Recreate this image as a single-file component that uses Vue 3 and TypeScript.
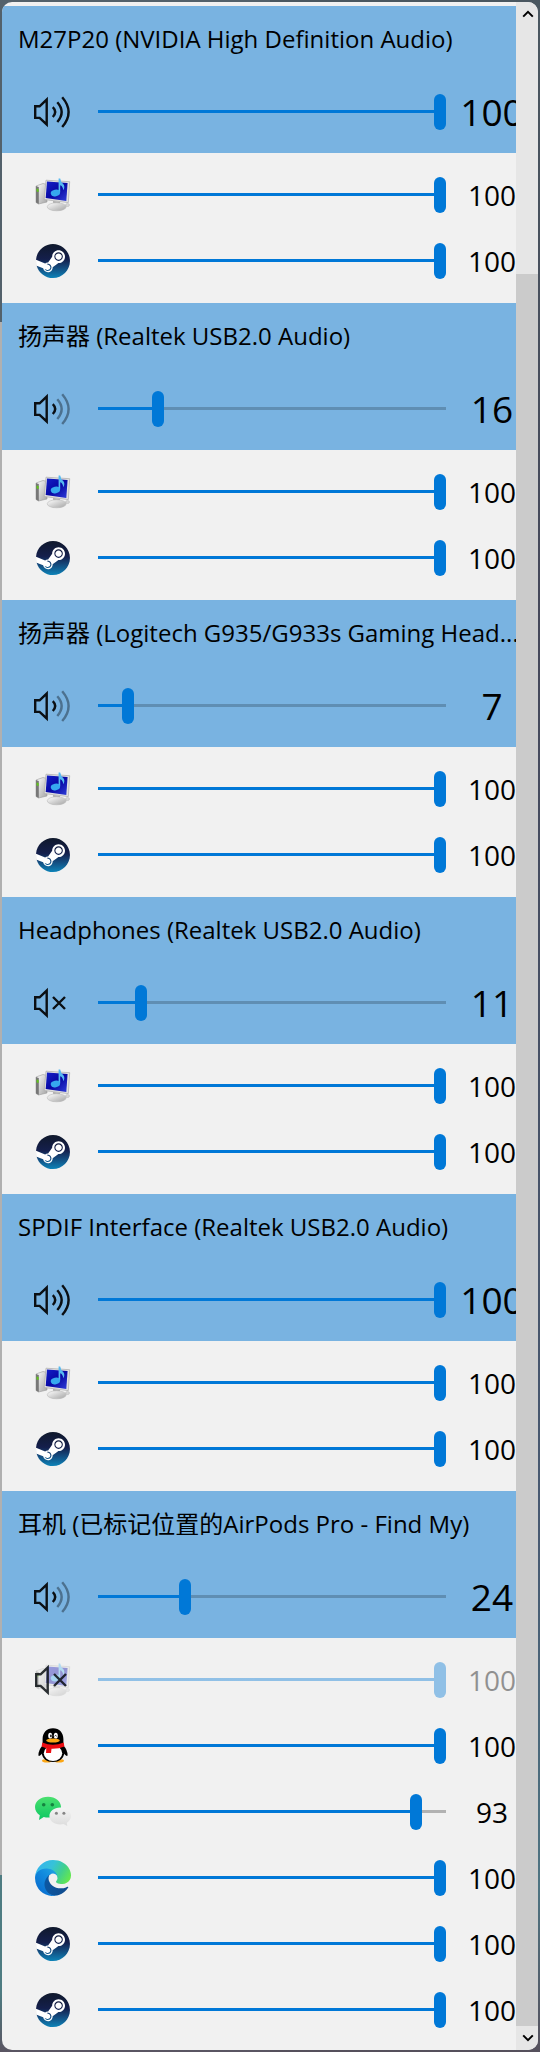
<script setup lang="ts">
import { reactive, ref } from 'vue'

type IconName = 'system' | 'steam' | 'qq' | 'wechat' | 'edge'

interface AppSession {
  name: string
  icon: IconName
  volume: number
  muted: boolean
}

interface Device {
  name: string
  volume: number
  muted: boolean
  apps: AppSession[]
}

const session = (name: string, icon: IconName, volume = 100, muted = false): AppSession => ({
  name,
  icon,
  volume,
  muted,
})

const defaultApps = (): AppSession[] => [session('System Sounds', 'system'), session('Steam', 'steam')]

const devices = reactive<Device[]>([
  { name: 'M27P20 (NVIDIA High Definition Audio)', volume: 100, muted: false, apps: defaultApps() },
  { name: '扬声器 (Realtek USB2.0 Audio)', volume: 16, muted: false, apps: defaultApps() },
  { name: '扬声器 (Logitech G935/G933s Gaming Head...', volume: 7, muted: false, apps: defaultApps() },
  { name: 'Headphones (Realtek USB2.0 Audio)', volume: 11, muted: true, apps: defaultApps() },
  { name: 'SPDIF Interface (Realtek USB2.0 Audio)', volume: 100, muted: false, apps: defaultApps() },
  {
    name: '耳机 (已标记位置的AirPods Pro - Find My)',
    volume: 24,
    muted: false,
    apps: [
      session('System Sounds', 'system', 100, true),
      session('QQ', 'qq'),
      session('WeChat', 'wechat', 93),
      session('Microsoft Edge', 'edge'),
      session('Steam', 'steam'),
      session('Steam', 'steam'),
    ],
  },
])

const waves = ['M18.8 13.2Q23.6 18 18.8 23', 'M23.3 8.3Q32 18 23.3 28', 'M28.2 3.2Q41 18 28.2 33']

const scroll = ref({ before: 248, thumb: 1752 })

const isLit = (volume: number, index: number) => volume > index * 33
</script>

<template>
  <svg class="sprite" aria-hidden="true">
    <defs>
      <linearGradient id="steam-fill" x1="0" y1="0" x2="0" y2="1">
        <stop offset="0" stop-color="#10192c" />
        <stop offset="0.45" stop-color="#141f4c" />
        <stop offset="0.7" stop-color="#144b7e" />
        <stop offset="1" stop-color="#0d83b8" />
      </linearGradient>
      <linearGradient id="case-fill" x1="0" y1="0" x2="1" y2="1">
        <stop offset="0" stop-color="#ffffff" />
        <stop offset="1" stop-color="#a4a4a4" />
      </linearGradient>
      <linearGradient id="screen-fill" x1="0" y1="0" x2="1" y2="1">
        <stop offset="0" stop-color="#1420c8" />
        <stop offset="0.5" stop-color="#0808a4" />
        <stop offset="1" stop-color="#2f3ed8" />
      </linearGradient>
      <linearGradient id="chat-fill" x1="0" y1="0" x2="0" y2="1">
        <stop offset="0" stop-color="#4be06f" />
        <stop offset="1" stop-color="#0cc763" />
      </linearGradient>
      <linearGradient id="bubble-fill" x1="0" y1="0" x2="0" y2="1">
        <stop offset="0" stop-color="#f4f4f4" />
        <stop offset="1" stop-color="#dcdcdc" />
      </linearGradient>
      <linearGradient id="edge-deep" x1="0" y1="0.5" x2="1" y2="0.5">
        <stop offset="0" stop-color="#0c59a4" />
        <stop offset="1" stop-color="#114a8b" />
      </linearGradient>
      <linearGradient id="edge-mid" x1="0.8" y1="0.2" x2="0.2" y2="0.9">
        <stop offset="0" stop-color="#1b9de2" />
        <stop offset="0.4" stop-color="#1188dd" />
        <stop offset="1" stop-color="#0a6fd0" />
      </linearGradient>
      <linearGradient id="edge-top" x1="0" y1="0.3" x2="1" y2="0.7">
        <stop offset="0" stop-color="#35b4ee" />
        <stop offset="0.4" stop-color="#36c2d8" />
        <stop offset="0.7" stop-color="#40d08e" />
        <stop offset="1" stop-color="#66e84c" />
      </linearGradient>
    </defs>

    <symbol id="icon-system" viewBox="0 0 36 36">
      <path d="M1 9L8 6.500L12 7.500V25L3.500 27L1 25.500Z" fill="url(#case-fill)" stroke="#9b9b9b" stroke-width="0.600" />
      <path d="M1 9L3.800 10V27L1 25.500Z" fill="#777" />
      <path d="M1.600 11.500L3.600 12V15L1.600 14.500Z" fill="#61c51c" />
      <ellipse cx="32.500" cy="28" rx="2" ry="1.500" fill="#d6d6d6" stroke="#b4b4b4" stroke-width="0.500" />
      <path d="M18 24L25 25L24.500 29H18.500Z" fill="#a9a9a9" />
      <ellipse cx="21.700" cy="29.800" rx="9.500" ry="4" fill="url(#case-fill)" stroke="#bcbcbc" stroke-width="0.600" />
      <path d="M11 3.200L34.700 4.700L33.300 25.600L9.200 22.500Z" fill="#e2e2e2" stroke="#ababab" stroke-width="0.700" />
      <path d="M12 4.600L32.600 6L31.300 23.900L10.700 21Z" fill="url(#screen-fill)" />
      <path d="M23.600 1.500H25.200Q25.600 5 28.600 7.500Q30.200 10 28.300 13.200Q27.800 9 25.200 8.200V15.500H23.600Z" fill="#55b9f1" />
      <ellipse cx="20.400" cy="16" rx="4.700" ry="3.300" transform="rotate(-12 20.400 16)" fill="#36a9ef" />
    </symbol>

    <symbol id="icon-steam" viewBox="0 0 36 36">
      <g transform="translate(1 1) scale(1.4167)">
        <circle cx="12" cy="12" r="11.700" fill="#fff" />
        <path
          fill="url(#steam-fill)"
          d="M11.979 0C5.678 0 .511 4.86.022 11.037l6.432 2.658c.545-.371 1.203-.59 1.912-.59.063 0 .125.004.188.006l2.861-4.142V8.91c0-2.495 2.028-4.524 4.524-4.524 2.494 0 4.524 2.031 4.524 4.527s-2.03 4.525-4.524 4.525h-.105l-4.076 2.911c0 .052.004.105.004.159 0 1.875-1.515 3.396-3.39 3.396-1.635 0-3.016-1.173-3.331-2.727L.436 15.27C1.862 20.307 6.486 24 11.979 24c6.627 0 11.999-5.373 11.999-12S18.605 0 11.979 0zM7.54 18.21l-1.473-.61c.262.543.714.999 1.314 1.25 1.297.539 2.793-.076 3.332-1.375.263-.63.264-1.319.005-1.949s-.75-1.121-1.377-1.383c-.624-.26-1.29-.249-1.878-.03l1.523.63c.956.4 1.409 1.5 1.009 2.455-.397.957-1.497 1.41-2.454 1.012H7.54zm11.415-9.303c0-1.662-1.353-3.015-3.015-3.015-1.665 0-3.015 1.353-3.015 3.015 0 1.665 1.35 3.015 3.015 3.015 1.663 0 3.015-1.35 3.015-3.015zm-5.273-.005c0-1.252 1.013-2.266 2.265-2.266 1.249 0 2.266 1.014 2.266 2.266 0 1.251-1.017 2.265-2.266 2.265-1.253 0-2.265-1.014-2.265-2.265z"
        />
      </g>
    </symbol>

    <symbol id="icon-qq" viewBox="0 0 36 36">
      <ellipse cx="12" cy="32.800" rx="5" ry="1.800" fill="#fba614" />
      <ellipse cx="24" cy="32.800" rx="5" ry="1.800" fill="#fba614" />
      <path d="M8 17Q3.300 22 3.400 27.500Q4.500 29 7.500 25Z" />
      <path d="M28 17Q32.700 22 32.600 27.500Q31.500 29 28.500 25Z" />
      <path d="M18 0.300C11.500 0.300 7.600 5 7.600 11V17Q6 21 6.600 25C7.500 31 12 34 18 34S28.500 31 29.400 25Q30 21 28.400 17V11C28.400 5 24.500 0.300 18 0.300Z" />
      <ellipse cx="18" cy="25.300" rx="9.200" ry="7.800" fill="#fff" />
      <ellipse cx="15.200" cy="7.700" rx="2" ry="2.900" fill="#fff" />
      <ellipse cx="20.800" cy="7.700" rx="2" ry="2.900" fill="#fff" />
      <ellipse cx="15.900" cy="7.900" rx="0.800" ry="1.300" />
      <path d="M19.600 8.200Q20.500 6.700 21.600 8.200" fill="none" stroke="#000" stroke-width="0.900" />
      <ellipse cx="18" cy="12.500" rx="6.800" ry="2" fill="#fba614" />
      <path d="M7.300 14.500Q18 19 28.700 14.500L29.400 18.500Q24 21 16.500 20.800L16 25H11L11.300 20.200L6.600 18.500Z" fill="#ec0d12" />
    </symbol>

    <symbol id="icon-wechat" viewBox="0 0 36 36">
      <path d="M13 2.700C5.600 2.700 0 7.300 0 13C0 16.500 2 19.300 4.800 21.300L4 26L8.800 23C10.200 23.400 11.500 23.600 13 23.600C20.400 23.600 26 19 26 13S20.400 2.700 13 2.700Z" fill="url(#chat-fill)" />
      <circle cx="8.700" cy="10.700" r="1.800" fill="#15823f" />
      <circle cx="17.300" cy="10.700" r="1.800" fill="#15823f" />
      <path d="M25.200 13.500C19 13.500 14.400 17.300 14.400 22S19 30.500 25.200 30.500Q27 30.500 28.500 30.100L32.300 32L31.800 28.800C34.300 27.200 36 24.800 36 22C36 17.300 31.300 13.500 25.200 13.500Z" fill="url(#bubble-fill)" />
      <circle cx="21.400" cy="19.300" r="1.500" fill="#858585" />
      <circle cx="28.900" cy="19.300" r="1.500" fill="#858585" />
    </symbol>

    <symbol id="icon-edge" viewBox="0 0 256 256">
      <path
        fill="url(#edge-deep)"
        transform="translate(-4.630 -4.920)"
        d="M235.680 195.460a93.730 93.730 0 0 1-10.540 4.710 101.870 101.870 0 0 1-35.900 6.460c-47.320 0-88.540-32.550-88.540-74.320A31.480 31.480 0 0 1 117.130 105c-42.800 1.800-53.800 46.400-53.800 72.530 0 73.880 68.090 81.370 82.760 81.370 7.910 0 19.840-2.300 27-4.560l1.310-.44a128.340 128.340 0 0 0 66.600-52.800 4 4 0 0 0-5.320-5.640z"
      />
      <path
        fill="url(#edge-mid)"
        transform="translate(-4.630 -4.920)"
        d="M110.340 246.340A79.200 79.200 0 0 1 87.600 225a80.720 80.720 0 0 1 29.530-120c3.120-1.470 8.450-4.050 15.540-4a32.350 32.350 0 0 1 25.690 13 31.880 31.880 0 0 1 6.360 18.660c0-.21 24.460-79.600-80-79.600-43.900 0-80 41.660-80 78.210a130.150 130.150 0 0 0 12.110 56 128 128 0 0 0 156.380 67.110 75.550 75.550 0 0 1-62.780-8z"
      />
      <path
        fill="url(#edge-top)"
        d="M152.330 148.860c-.81 1.050-3.300 2.500-3.300 5.660 0 2.610 1.700 5.120 4.720 7.230 14.380 10 41.490 8.680 41.560 8.680a59.560 59.560 0 0 0 30.270-8.350 61.380 61.380 0 0 0 30.430-52.880c.26-22.410-8-37.310-11.340-43.910C223.460 23.840 177.720 0 128 0A128 128 0 0 0 0 126.200c.48-36.540 36.800-66.050 80-66.050 3.500 0 23.460.34 42 10.070 16.340 8.580 24.900 18.940 30.850 29.210 6.180 10.670 7.280 24.150 7.280 29.520s-2.740 13.330-7.800 19.910z"
      />
    </symbol>
  </svg>

  <div class="desktop">
    <div class="flyout">
      <main class="devices">
        <section v-for="(device, d) in devices" :key="d" class="device">
          <header class="device-head">
            <h2 class="device-name">{{ device.name }}</h2>
            <div class="row row-main">
              <button
                class="icon-button"
                type="button"
                :aria-label="`Mute ${device.name}`"
                :aria-pressed="device.muted"
                @click="device.muted = !device.muted"
              >
                <svg class="icon speaker" viewBox="1 0 36 36">
                  <path d="M1.200 12.300H5.600L12.700 5.600V30.400L5.600 23.900H1.200Z" />
                  <path v-if="device.muted" d="M19 12L31 24M31 12L19 24" />
                  <template v-else>
                    <path v-for="(w, i) in waves" :key="i" :class="{ dim: !isLit(device.volume, i) }" :d="w" />
                  </template>
                </svg>
              </button>
              <input
                :id="`device-${d}`"
                v-model.number="device.volume"
                class="slider"
                type="range"
                min="0"
                max="100"
                :aria-label="device.name"
                :style="{ '--value': device.volume / 100 }"
              />
              <output class="value" :for="`device-${d}`">{{ device.volume }}</output>
            </div>
          </header>

          <div class="apps">
            <div v-for="(app, a) in device.apps" :key="a" class="row" :class="{ muted: app.muted }">
              <button
                class="icon-button"
                type="button"
                :aria-label="`Mute ${app.name}`"
                :aria-pressed="app.muted"
                @click="app.muted = !app.muted"
              >
                <svg class="icon app-icon" viewBox="0 0 36 36"><use :href="`#icon-${app.icon}`" /></svg>
                <svg v-if="app.muted" class="icon speaker mute-badge" viewBox="0 0 36 36">
                  <path d="M1.200 12.300H5.600L12.700 5.600V30.400L5.600 23.900H1.200Z" />
                  <path d="M19 12L31 24M31 12L19 24" />
                </svg>
              </button>
              <input
                :id="`app-${d}-${a}`"
                v-model.number="app.volume"
                class="slider"
                type="range"
                min="0"
                max="100"
                :aria-label="app.name"
                :style="{ '--value': app.volume / 100 }"
              />
              <output class="value" :for="`app-${d}-${a}`">{{ app.volume }}</output>
            </div>
          </div>
        </section>
      </main>

      <div class="scrollbar">
        <button class="scroll-button" type="button" aria-label="Scroll up">
          <svg viewBox="0 0 12 8"><path d="M1.200 6.600L6 1.800L10.800 6.600" /></svg>
        </button>
        <div class="scroll-gap" :style="{ flexGrow: scroll.before }"></div>
        <div class="scroll-thumb" :style="{ flexGrow: scroll.thumb }"></div>
        <button class="scroll-button" type="button" aria-label="Scroll down">
          <svg viewBox="0 0 12 8"><path d="M1.200 1.400L6 6.200L10.800 1.400" /></svg>
        </button>
      </div>
    </div>
  </div>
</template>

<style>
body {
  margin: 0;
}
</style>

<style scoped>
.sprite {
  position: absolute;
  width: 0;
  height: 0;
}

.desktop {
  box-sizing: border-box;
  min-height: 100vh;
  padding: 2px;
  background:
    linear-gradient(#53616b 0 322px, #b0b0b0 322px calc(100% - 177px), #4e7c82 calc(100% - 177px) calc(100% - 60px), #5a5562) 0 0 / 50% 100% no-repeat,
    linear-gradient(#4a5760, #45485a 30%, #485a72 75%, #4e7482 92%, #55505c) 100% 0 / 50% 100% no-repeat;
}

.flyout {
  display: flex;
  overflow: hidden;
  border-radius: 10px;
  background: #f1f1f1;
  color: #000;
  font-family: "Open Sans", "Noto Sans CJK SC", sans-serif;
}

.devices {
  flex: 1;
  min-width: 0;
  overflow: hidden;
  padding-top: 4px;
}

.device-head {
  padding: 18px 0 8px;
  background: #79b3e1;
}

.device-name {
  margin: 0 0 25px;
  padding-left: 16px;
  overflow: hidden;
  font-size: 24px;
  font-weight: 400;
  line-height: 30px;
  white-space: nowrap;
}

.row {
  display: flex;
  align-items: center;
  height: 66px;
  padding-left: 33px;
}

.apps {
  padding: 9px 0;
}

.device:last-child .apps {
  padding-bottom: 7px;
}

.icon-button {
  display: grid;
  flex: none;
  width: 36px;
  height: 36px;
  margin-right: 27px;
  padding: 0;
  border: 0;
  background: none;
}

.icon {
  grid-area: 1 / 1;
  width: 36px;
  height: 36px;
  overflow: visible;
}

.speaker {
  fill: none;
  stroke: #0b0f13;
  stroke-width: 2.4;
}

.speaker .dim {
  opacity: 0.4;
}

.mute-badge {
  opacity: 0.85;
}

.slider {
  flex: 1;
  min-width: 0;
  height: 36px;
  margin: 0;
  appearance: none;
  --fill: calc(6px + (100% - 12px) * var(--value));
  background: linear-gradient(to right, #0078d7 var(--fill), #b2b2b2 var(--fill)) 0 16px / 100% 3px no-repeat;
}

.row-main .slider {
  background-image: linear-gradient(to right, #0078d7 var(--fill), #5f8eb3 var(--fill));
}

.slider::-webkit-slider-runnable-track {
  height: 36px;
}

.slider::-webkit-slider-thumb {
  width: 12px;
  height: 36px;
  appearance: none;
  border-radius: 6px;
  background: #0078d7;
}

.value {
  display: flex;
  flex: none;
  justify-content: center;
  width: 48px;
  margin-left: 22px;
  font-size: 28px;
  line-height: 36px;
  white-space: nowrap;
}

.row-main .value {
  font-size: 37px;
}

.muted .app-icon,
.muted .slider,
.muted .value {
  opacity: 0.4;
}

.scrollbar {
  display: flex;
  flex: none;
  flex-direction: column;
  width: 22px;
  background: #e6e6e6;
}

.scroll-button {
  display: grid;
  flex: none;
  place-items: center;
  height: 24px;
  padding: 0 0 0 2px;
  border: 0;
  background: none;
}

.scroll-button svg {
  width: 12px;
  height: 8px;
  fill: none;
  stroke: #000;
  stroke-width: 2;
}

.scroll-gap,
.scroll-thumb {
  flex-basis: 0;
}

.scroll-thumb {
  background: #cbcbcb;
}
</style>
